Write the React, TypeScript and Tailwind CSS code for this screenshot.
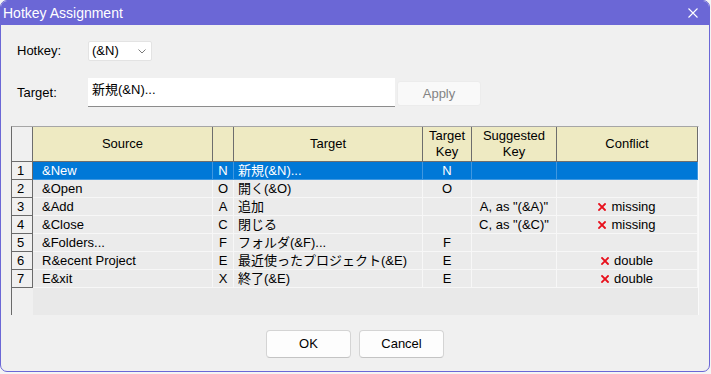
import React from 'react';

type Row = {
  n: number;
  src: string;
  key: string;
  tgt: string;
  tk: string;
  sk: string;
  conflict: string;
};

const rows: Row[] = [
  { n: 1, src: '&New', key: 'N', tgt: '新規(&N)...', tk: 'N', sk: '', conflict: '' },
  { n: 2, src: '&Open', key: 'O', tgt: '開く(&O)', tk: 'O', sk: '', conflict: '' },
  { n: 3, src: '&Add', key: 'A', tgt: '追加', tk: '', sk: 'A, as "(&A)"', conflict: 'missing' },
  { n: 4, src: '&Close', key: 'C', tgt: '閉じる', tk: '', sk: 'C, as "(&C)"', conflict: 'missing' },
  { n: 5, src: '&Folders...', key: 'F', tgt: 'フォルダ(&F)...', tk: 'F', sk: '', conflict: '' },
  { n: 6, src: 'R&ecent Project', key: 'E', tgt: '最近使ったプロジェクト(&E)', tk: 'E', sk: '', conflict: 'double' },
  { n: 7, src: 'E&xit', key: 'X', tgt: '終了(&E)', tk: 'E', sk: '', conflict: 'double' },
];

const RedX = () => (
  <svg width="8" height="8" viewBox="0 0 8 8" className="shrink-0">
    <path d="M1 1 L7 7 M7 1 L1 7" stroke="#e8101c" strokeWidth="1.8" strokeLinecap="square" />
  </svg>
);

const HeaderCell = ({ w, children }: { w: string; children?: React.ReactNode }) => (
  <div className={`${w} h-full flex flex-col items-center justify-center text-center leading-[16px] bg-[#eeeac2] border-r border-b border-[#6d6d6d]`}>
    {children}
  </div>
);

const GridRow = ({ row }: { row: Row }) => {
  const sel = row.n === 1;
  const cell = `h-full flex items-center border-r border-b ${sel ? 'border-[#3f97e0]' : 'border-[#f7f7f7]'}`;
  return (
    <div className={`flex h-[18px] ${sel ? 'bg-[#0078d7] text-white' : 'bg-[#ebebeb] text-black'}`}>
      <div className="w-[21px] h-full flex items-center pl-[5px] bg-[#f0f0f0] text-black border-r border-b border-[#6a6a6a]">
        {row.n}
      </div>
      <div className={`w-[180px] pl-[9px] ${cell}`}>{row.src}</div>
      <div className={`w-[21px] justify-center ${cell}`}>{row.key}</div>
      <div className={`w-[189px] pl-[4px] whitespace-nowrap ${cell}`}>{row.tgt}</div>
      <div className={`w-[49px] justify-center ${cell}`}>{row.tk}</div>
      <div className={`w-[85px] justify-center whitespace-nowrap ${cell}`}>{row.sk}</div>
      <div className={`w-[141px] justify-center gap-[5px] ${cell}`}>
        {row.conflict && (
          <>
            <RedX />
            <span>{row.conflict}</span>
          </>
        )}
      </div>
    </div>
  );
};

export default function App() {
  return (
    <div className="w-[711px] h-[374px] bg-[#f4f4f4] font-['Liberation_Sans','Noto_Sans_CJK_JP',sans-serif] text-[13px] text-black">
      <div className="w-[710px] h-[372px] rounded-[7px] border border-[#6b67d6] bg-[#f0f0f0] overflow-hidden flex flex-col">
        {/* title bar */}
        <div className="h-[24px] shrink-0 bg-[#6b67d6] flex items-center justify-between pl-[2px] pr-[11px]">
          <span className="text-[14px] text-white">Hotkey Assignment</span>
          <svg width="10" height="10" viewBox="0 0 10 10">
            <path d="M0.5 0.5 L9.5 9.5 M9.5 0.5 L0.5 9.5" stroke="#ffffff" strokeWidth="1.1" />
          </svg>
        </div>

        {/* hotkey */}
        <div className="flex items-center mt-[16px] ml-[16px]">
          <span className="w-[71px]">Hotkey:</span>
          <div className="w-[64px] h-[20px] bg-white border border-[#e3e3e3] rounded-[2px] flex items-center justify-between pl-[3px] pr-[5px]">
            <span>(&amp;N)</span>
            <svg width="8" height="5" viewBox="0 0 8 5">
              <path d="M0.5 0.5 L4 4 L7.5 0.5" stroke="#7a7a7a" strokeWidth="1" fill="none" />
            </svg>
          </div>
        </div>

        {/* target */}
        <div className="flex items-center mt-[17px] ml-[16px]">
          <span className="w-[71px]">Target:</span>
          <div className="w-[307px] h-[29px] bg-white border-b border-[#8c8c8c] pl-[4px] pt-[2px]">新規(&amp;N)...</div>
          <div className="w-[84px] h-[25px] ml-[2px] mt-[2px] bg-[#f9f9f9] border border-[#ececec] rounded-[3px] flex items-center justify-center text-[#838383]">
            Apply
          </div>
        </div>

        {/* grid */}
        <div className="w-[688px] h-[189px] mt-[19px] ml-[10px] flex flex-col border-l border-t border-r border-l-[#6a6a6a] border-t-[#a6a6a6] border-r-[#fafafa]">
          <div className="flex h-[35px]">
            <div className="w-[21px] h-full bg-[#f0f0f0] border-r border-b border-[#6d6d6d]" />
            <HeaderCell w="w-[180px]">Source</HeaderCell>
            <HeaderCell w="w-[21px]" />
            <HeaderCell w="w-[189px]">Target</HeaderCell>
            <HeaderCell w="w-[49px]">
              <span>Target</span>
              <span>Key</span>
            </HeaderCell>
            <HeaderCell w="w-[85px]">
              <span>Suggested</span>
              <span>Key</span>
            </HeaderCell>
            <HeaderCell w="w-[141px]">Conflict</HeaderCell>
          </div>
          {rows.map((r) => (
            <GridRow key={r.n} row={r} />
          ))}
          <div className="flex flex-1">
            <div className="w-[21px] bg-[#f0f0f0]" />
            <div className="flex-1 bg-[#e9e9e9]" />
          </div>
        </div>

        {/* buttons */}
        <div className="flex justify-center gap-[8px] mt-[15px]">
          <div className="w-[85px] h-[28px] bg-[#fdfdfd] border border-[#d4d4d4] border-b-[#c4c4c4] rounded-[4px] flex items-center justify-center">
            OK
          </div>
          <div className="w-[85px] h-[28px] bg-[#fdfdfd] border border-[#d4d4d4] border-b-[#c4c4c4] rounded-[4px] flex items-center justify-center">
            Cancel
          </div>
        </div>
      </div>
    </div>
  );
}
